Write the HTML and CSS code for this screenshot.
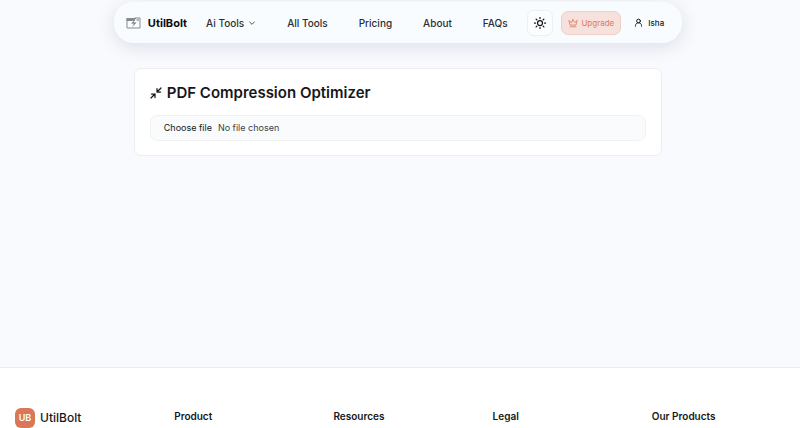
FILE: index.html
```html
<!DOCTYPE html>
<html lang="en">
<head>
    <meta charset="UTF-8">
    <meta name="viewport" content="width=device-width, initial-scale=1.0">
    <title>PDF Compression Optimizer - UtilBolt</title>
    <link rel="stylesheet" href="styles.css">
</head>
<body>

<div class="page">
<header class="navbar">
    <a href="#" class="brand">
        <svg class="brand-icon" viewBox="0 0 30 24" fill="none" stroke="#858b90" stroke-width="2">
            <path d="M1 2h19l-3 6H1z" fill="#858b90" stroke="none"/>
            <path d="M17 2h11v20H2V3"/>
            <path d="M18 6l-8 7h6l-4 7 9-9h-6z" fill="#6b7278" stroke="none"/>
            <path d="M21 6h5" stroke="#6b7278"/>
        </svg>
        <span>UtilBolt</span>
    </a>
    <nav class="nav-links">
        <a href="#">Ai Tools
            <svg class="chevron" viewBox="0 0 24 24" fill="none" stroke="currentColor" stroke-width="2.5" stroke-linecap="round" stroke-linejoin="round"><path d="m5 9 7 7 7-7"/></svg>
        </a>
        <a href="#">All Tools</a>
        <a href="#">Pricing</a>
        <a href="#">About</a>
        <a href="#">FAQs</a>
    </nav>
    <div class="nav-actions">
        <button type="button" class="theme-btn" aria-label="Toggle theme">
            <svg viewBox="0 0 24 24" fill="none" stroke="currentColor" stroke-width="2.5" stroke-linecap="round"><circle cx="12" cy="12" r="5"/><path d="M12 1v2M12 21v2M4.2 4.2l1.4 1.4M18.4 18.4l1.4 1.4M1 12h2M21 12h2M4.2 19.8l1.4-1.4M18.4 5.6l1.4-1.4"/></svg>
        </button>
        <button type="button" class="upgrade-btn">
            <svg viewBox="0 0 24 24" fill="none" stroke="currentColor" stroke-width="2" stroke-linecap="round" stroke-linejoin="round"><path d="m12 4 4 7 6-5-3 11H5L2 6l6 5zM5 21h14"/></svg>
            Upgrade
        </button>
        <button type="button" class="user-btn">
            <svg viewBox="0 0 24 24" fill="none" stroke="currentColor" stroke-width="2.5" stroke-linecap="round" stroke-linejoin="round"><circle cx="12" cy="8" r="5"/><path d="M4 22v-2c0-4 3-7 8-7s8 3 8 7v2"/></svg>
            Isha
        </button>
    </div>
</header>

<main>
    <section class="card">
        <h1>
            <svg viewBox="0 0 24 24" fill="none" stroke="currentColor" stroke-width="2.5" stroke-linecap="round" stroke-linejoin="round"><path d="M14 3v7h7M14 10l8-8M3 14h7v7M10 14l-8 8"/></svg>
            PDF Compression Optimizer
        </h1>
        <label class="file-field" for="pdf">
            <input type="file" id="pdf" accept="application/pdf">
            <span>Choose file</span>
            <span class="file-name">No file chosen</span>
        </label>
    </section>
</main>
</div>

<footer class="footer">
    <a href="#" class="footer-brand"><span class="badge">UB</span>UtilBolt</a>
    <h2>Product</h2>
    <h2>Resources</h2>
    <h2>Legal</h2>
    <h2>Our Products</h2>
</footer>

</body>
</html>
```

FILE: styles.css
```css
* {
    box-sizing: border-box;
}
body {
    margin: 0;
    min-height: 100vh;
    display: flex;
    flex-direction: column;
    font-family: Inter, "Liberation Sans", sans-serif;
    font-size: 10px;
    line-height: 16px;
    color: #15181b;
    background: #f9fafd;
}
a {
    color: inherit;
    text-decoration: none;
}
button {
    font: inherit;
    color: inherit;
    border: none;
    background: none;
    padding: 0;
    cursor: pointer;
    display: flex;
    align-items: center;
    justify-content: center;
}
.page {
    flex: 1;
    padding: 1px 4px 0 0;
}
.navbar {
    width: 71.4%;
    margin: 0 auto;
    height: 42px;
    padding: 0 12px;
    display: flex;
    align-items: center;
    border-top: 1px solid #f3f5f9;
    border-radius: 20px;
    background: #f9fcff;
    box-shadow: 0 4px 18px rgba(60, 60, 110, 0.14);
}
.brand {
    display: flex;
    align-items: center;
    gap: 7px;
    font-size: 11px;
    font-weight: 700;
    color: #0b0d10;
}
.brand-icon {
    width: 15px;
    height: 12px;
}
.nav-links {
    display: flex;
    gap: 31px;
    margin-left: 19px;
    font-weight: 500;
    color: #2b2f33;
}
.nav-links a {
    display: flex;
    align-items: center;
    gap: 4px;
}
.chevron {
    width: 8px;
    height: 8px;
}
.nav-actions {
    display: flex;
    align-items: center;
    margin-left: auto;
    font-size: 8px;
}
.theme-btn {
    width: 26px;
    height: 26px;
    border: 1px solid #edf0f3;
    border-radius: 7px;
    background: #fbfdff;
}
.theme-btn svg {
    width: 12px;
    height: 12px;
}
.upgrade-btn {
    width: 60px;
    height: 24px;
    margin-left: 8px;
    gap: 3px;
    border: 1px solid #efcfc6;
    border-radius: 7px;
    background: #f6e1dc;
    color: #e07b5e;
}
.upgrade-btn svg {
    width: 10px;
    height: 10px;
}
.user-btn {
    gap: 5px;
    margin: 0 6px 0 13px;
    font-weight: 500;
}
.user-btn svg {
    width: 9px;
    height: 9px;
}
main {
    padding-top: 25px;
}
.card {
    width: 66.4%;
    margin: 0 auto;
    padding: 14px 15px;
    border: 1px solid #eceef0;
    border-radius: 7px;
    background: #fff;
}
.card h1 {
    display: flex;
    align-items: center;
    gap: 5px;
    margin: 0 0 12px;
    font-size: 15px;
    line-height: 20px;
    font-weight: 600;
}
.card h1 svg {
    width: 12px;
    height: 12px;
}
.file-field {
    display: flex;
    align-items: center;
    gap: 6px;
    height: 26px;
    padding: 0 13px;
    border: 1px solid #eff1f3;
    border-radius: 7px;
    background: #f9fbfc;
    font-size: 9px;
    position: relative;
    cursor: pointer;
}
.file-field input {
    position: absolute;
    inset: 0;
    width: 100%;
    opacity: 0;
}
.file-name {
    color: #3c4146;
}
.footer {
    display: grid;
    grid-template-columns: repeat(5, 1fr);
    gap: 26px;
    padding: 40px 15px 0;
    border-top: 1px solid #e9ebee;
    background: #fff;
}
.footer-brand {
    display: flex;
    align-items: center;
    gap: 5px;
    font-size: 12px;
    font-weight: 500;
}
.badge {
    width: 20px;
    height: 20px;
    border-radius: 6px;
    background: #d97757;
    color: #fff;
    font-size: 9px;
    line-height: 20px;
    font-weight: 600;
    text-align: center;
}
.footer h2 {
    margin: 0;
    font-size: 10px;
    font-weight: 600;
}
```
